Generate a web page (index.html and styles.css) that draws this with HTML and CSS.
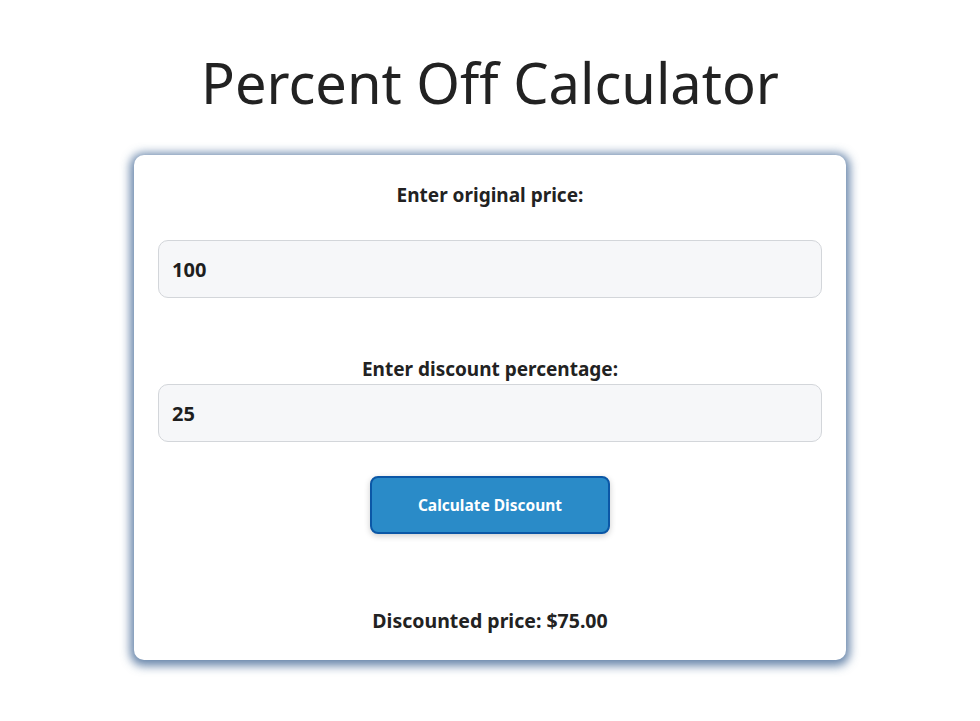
FILE: index.html
```html
<!DOCTYPE html>
<html lang="en">
<head>
<meta charset="utf-8">
<title>Percent Off Calculator</title>
<link rel="stylesheet" href="styles.css">
</head>
<body>
<h1 class="title">Percent Off Calculator</h1>
<div class="card">
  <label class="label first" for="price">Enter original price:</label>
  <input class="field" id="price" type="text" value="100">
  <label class="label second" for="pct">Enter discount percentage:</label>
  <input class="field" id="pct" type="text" value="25">
  <button class="btn" type="button">Calculate Discount</button>
  <p class="result">Discounted price: $75.00</p>
</div>
</body>
</html>
```
FILE: styles.css
```css
html, body {
  margin: 0;
  padding: 0;
  background: #ffffff;
}
body {
  font-family: "Noto Sans", "Open Sans", sans-serif;
  color: #222222;
  padding-bottom: 40px;
}
.title {
  margin: 42px 0 0;
  text-align: center;
  font-weight: 400;
  font-size: 56px;
  line-height: 80px;
  color: #222222;
}
.card {
  width: 664px;
  margin: 33px auto 0;
  padding: 24px 24px 26px;
  background: #fff;
  border-radius: 10px;
  box-shadow: 0 2px 10px 4px rgba(50, 90, 140, 0.72);
  display: flex;
  flex-direction: column;
  align-items: center;
}
.label {
  font-weight: 700;
  font-size: 19px;
  line-height: 26px;
  text-align: center;
}
.label.first { margin-top: 3px; margin-bottom: 32px; }
.label.second { margin-top: 58px; margin-bottom: 2px; }
.field {
  box-sizing: border-box;
  width: 100%;
  height: 58px;
  padding: 0 13px;
  border: 1px solid #d3d6da;
  border-radius: 10px;
  background: #f6f7f9;
  font-family: inherit;
  font-weight: 700;
  font-size: 20px;
  color: #1e1e1e;
}
.btn {
  margin-top: 34px;
  width: 240px;
  height: 58px;
  background: #2a8bc8;
  border: 2px solid #0b57a6;
  border-radius: 8px;
  color: #fff;
  font-family: inherit;
  font-weight: 700;
  font-size: 15.5px;
  box-shadow: 0 2px 6px rgba(0, 0, 0, 0.2);
}
.result {
  margin: 74px 0 0;
  font-weight: 700;
  font-size: 19.5px;
  line-height: 26px;
}
```
